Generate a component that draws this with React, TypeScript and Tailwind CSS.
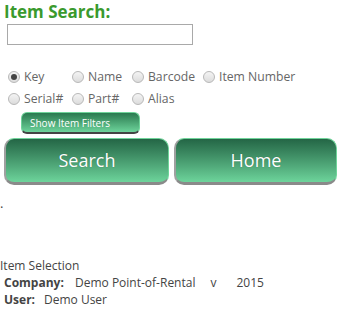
import React from "react";

const Radio = ({ checked, label }: { checked?: boolean; label: string }) => (
  <div className="flex items-center gap-[4px] h-[22px]">
    <span className="w-[12px] h-[12px] rounded-full border border-[#b8b8b8] bg-gradient-to-b from-[#f4f4f4] to-[#dcdcdc] flex items-center justify-center shrink-0">
      {checked && <span className="w-[6px] h-[6px] rounded-full bg-[#444]" />}
    </span>
    <span className="text-[12.2px] text-[#666] leading-none whitespace-nowrap">{label}</span>
  </div>
);

const BigButton = ({ label, w }: { label: string; w: string }) => (
  <button
    className={`${w} block h-[47px] rounded-[10px] border border-[#6fd49a] border-b-[3px] border-b-[#8a8a8a] border-l-[2px] border-l-[#a0a0a0] bg-gradient-to-b from-[#246646] to-[#6dd49b] text-white text-[18px] flex items-center justify-center`}
    style={{ textShadow: "0 0 1px rgba(0,0,0,0.3)" }}
  >
    {label}
  </button>
);

export default function App() {
  return (
    <div
      className="w-[344px] h-[315px] bg-white text-[#444] relative overflow-hidden"
      style={{ fontFamily: '"Open Sans", "Noto Sans", sans-serif' }}
    >
      <div className="pl-[4px] pt-[1px] text-[17px] font-bold text-[#3a9a2e] leading-[22px]">Item Search:</div>
      <div className="pl-[7px] pt-[1px]">
        <div className="w-[186px] h-[21px] border border-[#a9a9a9] bg-white" />
      </div>
      <div className="pl-[8px] pt-[21px] grid grid-cols-[64px_60px_71px_auto]">
        <Radio checked label="Key" />
        <Radio label="Name" />
        <Radio label="Barcode" />
        <Radio label="Item Number" />
        <Radio label="Serial#" />
        <Radio label="Part#" />
        <Radio label="Alias" />
      </div>
      <div className="pl-[21px] pt-[2px] flex">
        <button className="block w-[119px] h-[22px] rounded-[6px] border border-[#6fd49a] border-b-[2px] border-b-[#444] bg-gradient-to-b from-[#2a7a50] to-[#6dd49b] text-white text-[10px] text-left pl-[8px] leading-none">
          Show Item Filters
        </button>
      </div>
      <div className="pl-[4px] pt-[4px] flex gap-[5px]">
        <BigButton label="Search" w="w-[165px]" />
        <BigButton label="Home" w="w-[163px]" />
      </div>
      <div className="text-[13px] leading-none pt-[12px] text-[#444]">.</div>
      <div className="pt-[47px] text-[12px] leading-[17px] text-[#444]">Item Selection</div>
      <div className="pl-[4px] text-[12px] leading-[17px] text-[#444]">
        <div className="flex">
          <span className="font-bold w-[71px]">Company:</span>
          <span>Demo Point-of-Rental</span>
          <span className="ml-[15px]">v</span>
          <span className="ml-[20px]">2015</span>
        </div>
        <div className="flex">
          <span className="font-bold w-[40px]">User:</span>
          <span>Demo User</span>
        </div>
      </div>
    </div>
  );
}
